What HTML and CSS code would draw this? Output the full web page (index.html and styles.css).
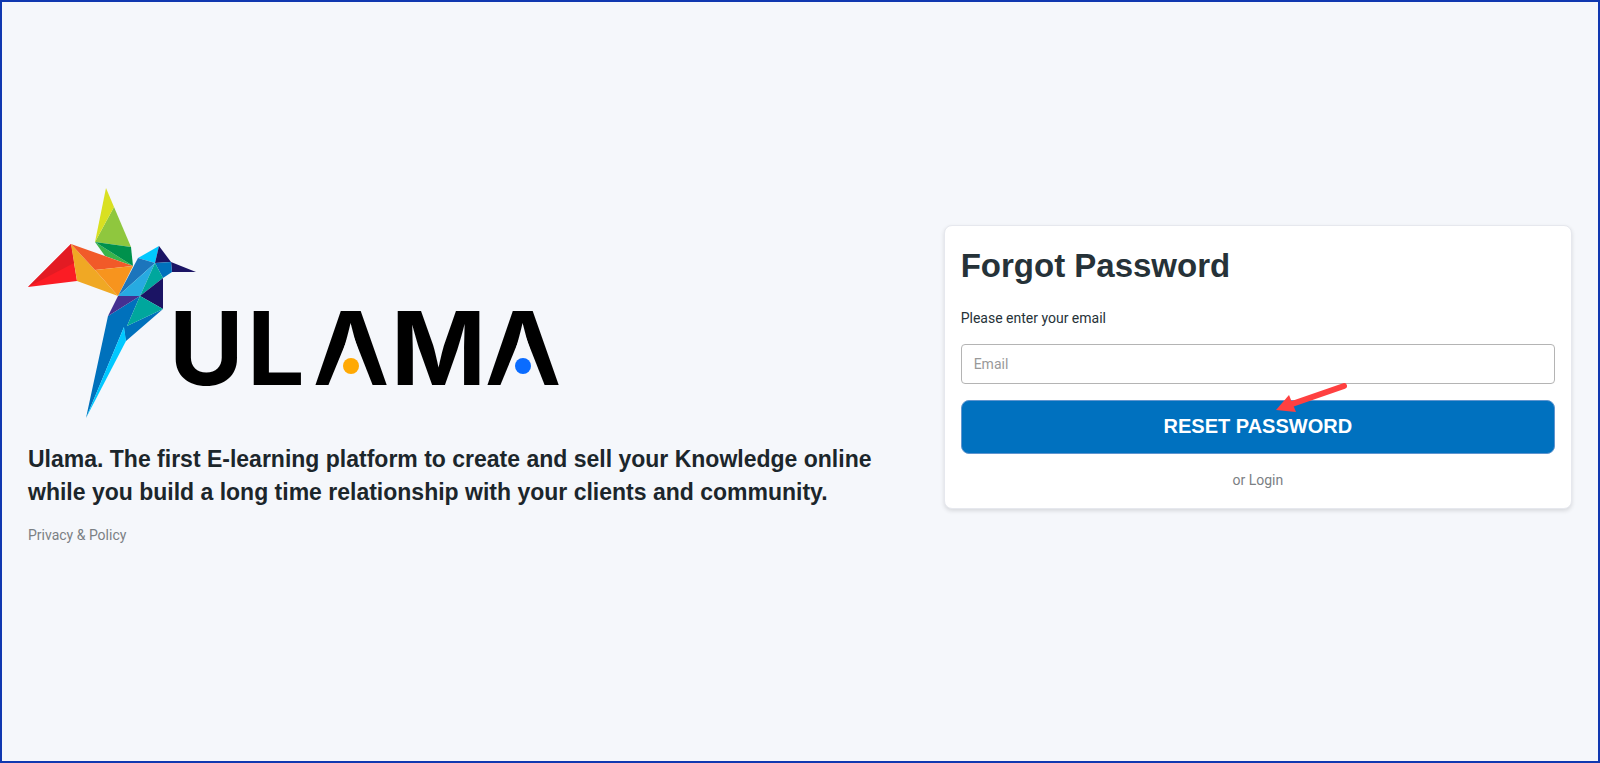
FILE: index.html
```html
<!DOCTYPE html>
<html lang="en">
<head>
    <meta charset="UTF-8">
    <meta name="viewport" content="width=device-width, initial-scale=1.0">
    <title>Ulama - Forgot Password</title>
    <link rel="stylesheet" href="styles.css">
</head>
<body>

<main class="page">
    <section class="intro">
        <svg class="logo" width="536" height="231" viewBox="0 0 536 231" role="img" aria-label="Ulama">
            <!-- wing -->
            <polygon fill="#8fc73e" points="86,19 103,59 67,54"/>
            <polygon fill="#d9e021" points="78,0 86,19 67,54"/>
            <polygon fill="#39b54a" points="67,54 77,68 105,78"/>
            <polygon fill="#00914c" points="67,54 103,59 105,78"/>
            <!-- left wing -->
            <polygon fill="#fb1c24" points="43,56 49,93 0,99"/>
            <polygon fill="#e31b23" points="43,56 46,75 0,99"/>
            <polygon fill="#f0a824" points="43,56 67,82 90,108 49,93"/>
            <polygon fill="#f15a29" points="43,56 105,78 67,82"/>
            <polygon fill="#f7941e" points="67,82 105,78 90,108"/>
            <!-- head -->
            <polygon fill="#00c8ff" points="110,70 131,58 127,75"/>
            <polygon fill="#1b1464" points="131,58 143,74 127,75"/>
            <polygon fill="#1b1464" points="143,74 168,84 144,84"/>
            <polygon fill="#0071bc" points="127,75 143,74 144,84 135,90"/>
            <!-- body -->
            <polygon fill="#1c75bc" points="110,70 127,75 90,108"/>
            <polygon fill="#27aae1" points="127,75 112,108 90,108"/>
            <polygon fill="#00a79d" points="127,75 135,90 112,108"/>
            <polygon fill="#1b1464" points="135,90 135,121 112,108"/>
            <polygon fill="#0071bc" points="112,108 99,138 98,153 96,139 58,230 80,128"/>
            <polygon fill="#443092" points="90,108 112,108 80,128"/>
            <polygon fill="#0071bc" points="99,138 135,121 98,153 96,139"/>
            <polygon fill="#00a79d" points="112,108 135,121 99,138"/>
            <polygon fill="#00c8ff" points="96,139 98,153 58,230"/>
            <!-- name -->
            <text class="logo-name" x="141 219 285 363 457" y="197">ULAMA</text>
            <polygon class="logo-gap" points="323,142 345,198 300,198"/>
            <polygon class="logo-gap" points="495,142 517,198 472,198"/>
            <circle fill="#ffa904" cx="323" cy="178" r="8"/>
            <circle fill="#0a6cff" cx="495" cy="178" r="8"/>
        </svg>
        <h2>Ulama. The first E-learning platform to create and sell your Knowledge online while you build a long time relationship with your clients and community.</h2>
        <a class="link" href="#">Privacy &amp; Policy</a>
    </section>

    <form class="card">
        <h1>Forgot Password</h1>
        <label for="email">Please enter your email</label>
        <input type="email" id="email" name="email" placeholder="Email" required>
        <div class="submit">
            <button type="submit">RESET PASSWORD</button>
            <svg class="arrow" width="72" height="32" viewBox="0 0 72 32" aria-hidden="true">
                <path d="M68 3 L16 21" stroke="#ff4040" stroke-width="6" stroke-linecap="round"/>
                <polygon fill="#ff4040" points="0,27 13,12 20,29"/>
            </svg>
        </div>
        <a class="link" href="#">or Login</a>
    </form>
</main>

</body>
</html>
```

FILE: styles.css
```css
* {
    box-sizing: border-box;
}
body {
    margin: 0;
    font-family: Roboto, sans-serif;
    font-size: 14px;
    color: #263238;
    background: #f5f7fb;
}
.page {
    display: grid;
    grid-template-columns: 7fr 5fr;
    gap: 36px;
    align-items: center;
    min-height: 100vh;
    padding: 0 26px 30px;
    border: 2px solid #1038b0;
}
.logo {
    display: block;
    max-width: 100%;
}
.logo-name {
    font-family: Inter, sans-serif;
    font-size: 102px;
    font-weight: 700;
    fill: #000;
}
.logo-gap {
    fill: #f5f7fb;
}
h1,
h2 {
    font-family: "Liberation Sans", Arial, sans-serif;
    font-weight: 700;
}
h1 {
    margin: 0 0 18px;
    font-size: 33px;
    line-height: 48px;
}
h2 {
    margin: 24px 0 16px;
    font-size: 23px;
    line-height: 33px;
    color: #1c262b;
}
.link {
    display: block;
    line-height: 20px;
    color: #7b8084;
    text-decoration: none;
}
.card {
    padding: 16px;
    background: #fff;
    border: 1px solid #e6e8ee;
    border-radius: 8px;
    box-shadow: 0 2px 4px rgba(0, 0, 0, 0.12);
}
.card label {
    display: block;
    line-height: 20px;
}
.card input {
    display: block;
    width: 100%;
    height: 40px;
    margin: 16px 0;
    padding: 0 12px;
    font: inherit;
    border: 1px solid #b4b4b4;
    border-radius: 4px;
}
.card input::placeholder {
    color: #999;
}
.card .link {
    margin: 16px 0 2px;
    text-align: center;
}
.submit {
    position: relative;
}
.submit button {
    display: block;
    width: 100%;
    height: 54px;
    font-family: "Liberation Sans", Arial, sans-serif;
    font-size: 20px;
    font-weight: 700;
    color: #fff;
    background: #0071bf;
    border: 1px solid #5f95cf;
    border-radius: 8px;
}
/* pointer over the button */
.arrow {
    position: absolute;
    top: -17px;
    left: 53%;
}
```
